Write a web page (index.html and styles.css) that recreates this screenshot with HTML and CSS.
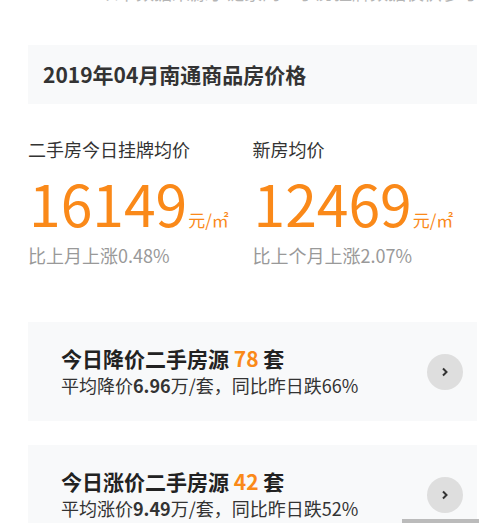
FILE: index.html
```html
<!DOCTYPE html>
<html lang="zh">
<head>
<meta charset="utf-8">
<link rel="stylesheet" href="styles.css">
</head>
<body>
<div class="page">
  <p class="cut">以下数据来源于链家网二手房挂牌数据仅供参考</p>
  <div class="title-box"><h1>2019年04月南通商品房价格</h1></div>
  <div class="stats">
    <div class="stat">
      <div class="label">二手房今日挂牌均价</div>
      <div class="price"><span class="num">16149</span><span class="unit">元/㎡</span></div>
      <div class="change">比上月上涨0.48%</div>
    </div>
    <div class="stat">
      <div class="label">新房均价</div>
      <div class="price"><span class="num">12469</span><span class="unit">元/㎡</span></div>
      <div class="change">比上个月上涨2.07%</div>
    </div>
  </div>
  <div class="card">
    <div class="card-text">
      <div class="card-title">今日降价二手房源 <span class="hl">78</span> 套</div>
      <div class="card-sub">平均降价<b>6.96</b>万/套，同比昨日跌66%</div>
    </div>
    <div class="arrow"><svg width="10" height="12" viewBox="0 0 10 12"><path d="M3 2.5 L6.5 6 L3 9.5" fill="none" stroke="#333" stroke-width="2"/></svg></div>
  </div>
  <div class="card">
    <div class="card-text">
      <div class="card-title">今日涨价二手房源 <span class="hl">42</span> 套</div>
      <div class="card-sub">平均涨价<b>9.49</b>万/套，同比昨日跌52%</div>
    </div>
    <div class="arrow"><svg width="10" height="12" viewBox="0 0 10 12"><path d="M3 2.5 L6.5 6 L3 9.5" fill="none" stroke="#333" stroke-width="2"/></svg></div>
  </div>
</div>
<div class="scrollbar"></div>
</body>
</html>
```
FILE: styles.css
```css
html, body {
  margin: 0;
  padding: 0;
  background: #fff;
  overflow: hidden;
}
body {
  font-family: "Noto Sans CJK SC", "Noto Sans", sans-serif;
  color: #333;
  width: 501px;
  height: 523px;
  position: relative;
}
.page {
  padding: 0 24px 0 28px;
}
.cut {
  margin: -21px 0 0 72px;
  font-size: 18px;
  line-height: 26px;
  color: #b5b5b5;
  white-space: nowrap;
}
.title-box {
  margin-top: 40px;
  height: 59px;
  background: #f8f9fa;
  display: flex;
  align-items: center;
  padding-left: 15px;
}
.title-box h1 {
  margin: 0;
  font-size: 21px;
  font-weight: 700;
  color: #333;
  line-height: 1;
}
.stats {
  display: flex;
  margin-top: 32px;
}
.stat {
  width: 225px;
}
.label {
  font-size: 18px;
  line-height: 26px;
  color: #333;
}
.price {
  display: flex;
  align-items: baseline;
  color: #fa8919;
  margin-top: 10px;
}
.num {
  font-size: 57px;
  line-height: 60px;
  margin-left: 1px;
}
.unit {
  font-size: 17px;
  margin-left: 1px;
}
.change {
  font-size: 18px;
  line-height: 26px;
  color: #999;
  margin-top: 10px;
}
.card {
  background: #f8f9fa;
  height: 99px;
  display: flex;
  align-items: center;
  justify-content: space-between;
  padding: 0 14px 0 33px;
  margin-top: 54px;
}
.card + .card {
  margin-top: 24px;
}
.card-title {
  font-size: 21px;
  font-weight: 700;
  line-height: 27px;
  color: #222;
}
.hl {
  color: #fa8919;
}
.card-sub {
  font-size: 18px;
  line-height: 26px;
  color: #333;
}
.card-sub b {
  font-weight: 700;
}
.arrow {
  width: 36px;
  height: 36px;
  border-radius: 50%;
  background: #dedede;
  display: flex;
  align-items: center;
  justify-content: center;
}
.arrow svg {
  display: block;
}
.scrollbar {
  position: absolute;
  left: 402px;
  top: 519px;
  width: 77px;
  height: 4px;
  background: #bbb;
}
```
